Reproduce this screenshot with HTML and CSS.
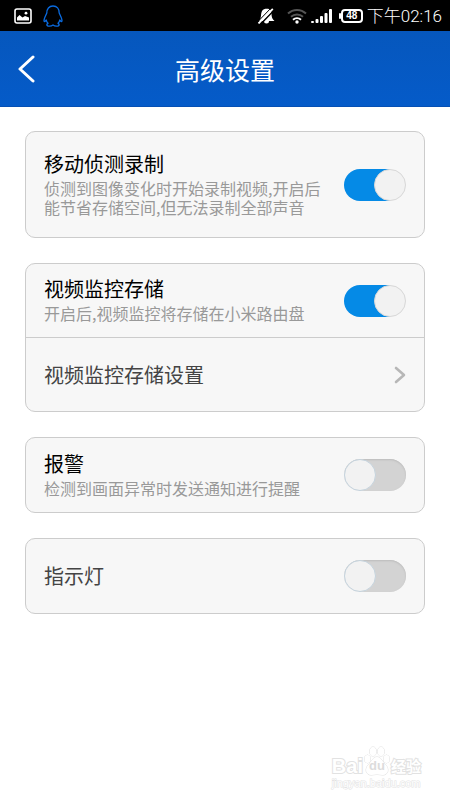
FILE: index.html
```html
<!DOCTYPE html>
<html lang="zh-CN">
<head>
<meta charset="utf-8">
<meta name="viewport" content="width=device-width, initial-scale=1">
<title>高级设置</title>
<link rel="stylesheet" href="styles.css">
</head>
<body>
<div class="statusbar">
  <div class="status-group notices">
    <svg width="18" height="16" viewBox="0 0 18 16" aria-hidden="true">
      <rect x="1" y="1" width="16" height="14" rx="2" fill="none" stroke="#fff" stroke-width="1.600"/>
      <path d="M3 12.500V9.500L5.500 7l3 2.500 2.500-1.500 4 1.500v3z" fill="#fff"/>
      <circle cx="12" cy="5.200" r="1.400" fill="#fff"/>
    </svg>
    <svg width="20" height="22" viewBox="0 0 20 22" fill="none" stroke="#0a6be0" stroke-width="1.300" stroke-linejoin="round" aria-hidden="true">
      <path d="M10 1C6 1 3.800 4 3.800 8L2 12C.8 15 .8 16.500 1.500 16.700 2 16.800 2.800 15.500 3.200 15 3.500 16.500 4.200 17.600 5 18.300 3.600 19 3.300 20.600 5 21c2 .3 3.800 0 5-1 1.200 1 3 1.300 5 1 1.700-.4 1.400-2 0-2.700.8-.7 1.500-1.800 1.800-3.300.4.500 1.200 1.800 1.700 1.700.7-.2.7-1.700-.5-4.700L16.200 8C16.200 4 14 1 10 1z"/>
    </svg>
  </div>
  <div class="status-group system">
    <svg class="bell" width="18" height="16" viewBox="0 0 18 16" aria-hidden="true">
      <path d="M2 13C4.500 10.500 3.500 7 4.800 3.500 5.800 1.200 8 .8 10 .8c3.500 0 4.500 2.200 4.500 5.200 0 3 .8 5 3 7zM7 13h5a2.500 2.500 0 0 1-5 0z" fill="#fff"/>
      <path d="M3 16.800 17.500 1.800" stroke="#000" stroke-width="1.500"/>
      <path d="M1.500 15.500 15.800.8" stroke="#fff" stroke-width="1.800"/>
      <path d="M.5 14 14.500-.5" stroke="#000" stroke-width="1"/>
    </svg>
    <svg width="20" height="16" viewBox="0 0 20 16" fill="none" stroke-width="2" aria-hidden="true">
      <path d="M1 5.500a13 13 0 0 1 18 0M4 8.800a9 9 0 0 1 12 0" stroke="#555"/>
      <path d="M6 11.800a6 6 0 0 1 8 0" stroke="#fff"/>
      <circle cx="10" cy="14" r="1.700" fill="#fff"/>
    </svg>
    <svg width="21" height="16" viewBox="0 0 21 16" fill="#fff" aria-hidden="true">
      <rect x="0" y="13" width="3" height="2" rx="1"/><rect x="4.500" y="11" width="3" height="4" rx="1"/><rect x="9" y="8" width="3" height="7" rx="1"/><rect x="13.500" y="5" width="3" height="10" rx="1"/><rect x="18" y="1" width="3" height="14" rx="1"/>
    </svg>
    <span class="battery">48</span>
    <time class="clock">下午02:16</time>
  </div>
</div>
<header class="header">
  <button class="back" type="button" aria-label="返回">
    <svg width="18" height="28" viewBox="0 0 18 28" fill="none" stroke="#fff" stroke-width="3" stroke-linecap="round" stroke-linejoin="round" aria-hidden="true"><path d="M15 2 2 14l13 12"/></svg>
  </button>
  <h1>高级设置</h1>
</header>
<main class="settings">
  <section class="card">
    <div class="row tall">
      <label class="text" for="motion"><span class="name">移动侦测录制</span><span class="desc">侦测到图像变化时开始录制视频,开启后能节省存储空间,但无法录制全部声音</span></label>
      <input class="switch" type="checkbox" id="motion" checked>
    </div>
  </section>
  <section class="card">
    <div class="row paired">
      <label class="text" for="storage"><span class="name">视频监控存储</span><span class="desc">开启后,视频监控将存储在小米路由盘</span></label>
      <input class="switch" type="checkbox" id="storage" checked>
    </div>
    <a class="row link" href="#storage-settings">
      <span class="plain">视频监控存储设置</span>
      <svg width="12" height="18" viewBox="0 0 12 18" fill="none" stroke="#b7b7b7" stroke-width="2.600" stroke-linecap="round" stroke-linejoin="round" aria-hidden="true"><path d="M2 2l8 7-8 7"/></svg>
    </a>
  </section>
  <section class="card">
    <div class="row">
      <label class="text" for="alarm"><span class="name">报警</span><span class="desc">检测到画面异常时发送通知进行提醒</span></label>
      <input class="switch" type="checkbox" id="alarm">
    </div>
  </section>
  <section class="card">
    <div class="row">
      <label class="plain" for="light">指示灯</label>
      <input class="switch" type="checkbox" id="light">
    </div>
  </section>
</main>
<div class="watermark">
  <div class="brand">
    <span class="latin">Bai</span>
    <span class="paw">
      <svg width="28" height="30" viewBox="0 0 28 30" fill="#fff" stroke="#dedede" aria-hidden="true">
        <ellipse cx="4.500" cy="13" rx="3" ry="4"/><ellipse cx="10" cy="5.500" rx="3.200" ry="4.500"/><ellipse cx="18" cy="5.500" rx="3.200" ry="4.500"/><ellipse cx="23.500" cy="13" rx="3" ry="4"/>
        <path d="M14 11c-4 0-5 4-8 7-5 5-3 11 2 11 2 0 4-.6 6-.6s4 .6 6 .6c5 0 7-6 2-11-3-3-4-7-8-7z"/>
      </svg>
      <span class="du">du</span>
    </span>
    <span class="cjk">经验</span>
  </div>
  <div class="site">jingyan.baidu.com</div>
</div>
</body>
</html>
```
FILE: styles.css
```css
*,
*::before {
  box-sizing: border-box;
}

body {
  position: relative;
  margin: 0;
  min-height: 100vh;
  background: #fff;
  color: #000;
  font-family: "Noto Sans CJK SC", sans-serif;
}

.statusbar {
  display: flex;
  align-items: center;
  justify-content: space-between;
  height: 31px;
  padding: 0 8px 0 14px;
  background: #000;
  color: #fff;
}

.status-group {
  display: flex;
  align-items: center;
}

.notices {
  gap: 11px;
}

.system {
  gap: 4px;
}

.bell {
  margin-right: 8px;
}

.battery {
  display: flex;
  align-items: center;
  justify-content: center;
  position: relative;
  width: 22px;
  height: 14px;
  margin-left: 5px;
  border: 2px solid #fff;
  border-radius: 4px;
  font: bold 10px/10px "Liberation Sans", sans-serif;
}

.battery::before {
  content: "";
  position: absolute;
  left: -4px;
  top: 2px;
  width: 2px;
  height: 6px;
  border-radius: 1px;
  background: #fff;
}

.clock {
  font-family: Roboto, "Noto Sans CJK SC", sans-serif;
  font-size: 17px;
  font-weight: 300;
  line-height: 24px;
}

.header {
  display: grid;
  grid-template-columns: 54px 1fr 54px;
  align-items: center;
  height: 76px;
  background: linear-gradient(#0657bd, #055bc9);
  border-bottom: 1px solid #0650b4;
}

.header h1 {
  margin: 0;
  color: #fff;
  font-size: 25px;
  font-weight: 400;
  line-height: 36px;
  text-align: center;
}

.back {
  display: flex;
  justify-content: center;
  padding: 0;
  border: 0;
  background: none;
}

.settings {
  display: grid;
  gap: 25px;
  padding: 24px 25px;
}

.card {
  overflow: hidden;
  border: 1px solid #ccc;
  border-radius: 10px;
  background: #f7f7f7;
}

.row {
  display: flex;
  align-items: center;
  justify-content: space-between;
  gap: 20px;
  min-height: 74px;
  padding: 0 18px;
}

.tall {
  min-height: 105px;
}

.paired {
  min-height: 73px;
}

.link {
  border-top: 1px solid #ccc;
  text-decoration: none;
}

.text {
  flex: 1;
  padding-bottom: 4px;
}

.name,
.desc {
  display: block;
}

.name {
  font-size: 20px;
  line-height: 30px;
}

.desc {
  color: #999;
  font-size: 16px;
  line-height: 19px;
}

.plain {
  color: #444;
  font-size: 20px;
  line-height: 28px;
}

.switch {
  appearance: none;
  display: flex;
  flex: none;
  width: 62px;
  height: 32px;
  margin: 0;
  border-radius: 16px;
  background: linear-gradient(90deg, #f2f2f2 25%, #d3d3d3 25%);
}

.switch::before {
  content: "";
  width: 32px;
  height: 32px;
  border: 1px solid #c5d3dd;
  border-radius: 50%;
  background: #f2f2f2;
}

.switch:not(:checked) {
  box-shadow: inset 0 1px 2px #bbb;
}

.switch:checked {
  justify-content: flex-end;
  background: linear-gradient(90deg, #058ae6 75%, #f2f2f2 75%);
}

.switch:checked::before {
  border-color: #d8d8d8;
}

.watermark {
  position: absolute;
  right: 29px;
  bottom: 9px;
  color: #fff;
  font-family: "Liberation Sans", sans-serif;
  -webkit-text-stroke: 2px #e2e2e2;
  paint-order: stroke fill;
}

.brand {
  display: flex;
  align-items: flex-end;
  line-height: 20px;
}

.latin {
  font-size: 20px;
  font-weight: bold;
}

.paw {
  display: grid;
  place-items: end center;
}

.paw > * {
  grid-area: 1 / 1;
}

.du {
  color: #dcdcdc;
  font-size: 13px;
  font-weight: bold;
  -webkit-text-stroke: 0;
}

.cjk {
  font-family: "Noto Sans CJK SC", sans-serif;
  font-size: 15px;
  font-weight: bold;
}

.site {
  font-size: 11px;
  line-height: 15px;
  -webkit-text-stroke: 1px #e2e2e2;
}
```
